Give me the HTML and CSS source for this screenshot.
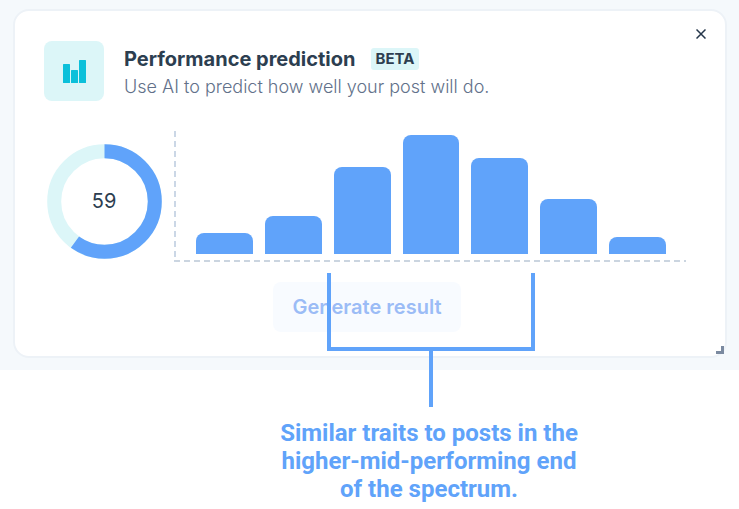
FILE: index.html
```html
<!DOCTYPE html>
<html lang="en">
<head>
  <meta charset="UTF-8" />
  <meta name="viewport" content="width=device-width, initial-scale=1" />
  <title>Performance prediction</title>
  <link rel="stylesheet" href="styles.css">
</head>
<body>
  <main>
    <div class="panel">
      <section class="card">
        <button type="button" class="close-btn" aria-label="Close">
          <svg width="10" height="10" viewBox="0 0 10 10">
            <path d="M0.5 0.5L9.5 9.5M9.5 0.5L0.5 9.5" stroke="#25364a" stroke-width="1.5" />
          </svg>
        </button>

        <!-- Title row -->
        <header class="card-header">
          <div class="card-icon">
            <svg width="24" height="24" viewBox="0 0 24 24" fill="#0cc0da">
              <rect x="1" y="5" width="7" height="19" rx="0.5" />
              <rect x="9" y="11" width="7" height="13" rx="0.5" />
              <rect x="17" y="1" width="7" height="23" rx="0.5" />
            </svg>
          </div>
          <div class="card-heading">
            <div class="title-row">
              <h1>Performance prediction</h1>
              <span class="badge">BETA</span>
            </div>
            <p class="subtitle">Use AI to predict how well your post will do.</p>
          </div>
        </header>

        <!-- Score and distribution -->
        <div class="results">
          <div class="gauge">
            <svg viewBox="0 0 116 116">
              <circle class="gauge-track" cx="58.5" cy="58.5" r="50.3" />
              <circle class="gauge-value" cx="58.5" cy="58.5" r="50.3" pathLength="100" transform="rotate(-90 58.5 58.5)" />
            </svg>
            <span class="score">59</span>
          </div>
          <div class="chart">
            <div class="bars">
              <div class="bar" style="height: 21px"></div>
              <div class="bar" style="height: 38px"></div>
              <div class="bar" style="height: 87px"></div>
              <div class="bar" style="height: 119px"></div>
              <div class="bar" style="height: 96px"></div>
              <div class="bar" style="height: 55px"></div>
              <div class="bar" style="height: 17px"></div>
              <svg class="bracket" width="208" height="134" viewBox="0 0 208 134">
                <path d="M2 0V76H206V0M104 76V134" />
              </svg>
            </div>
          </div>
        </div>

        <button type="button" class="generate-btn" disabled>Generate result</button>

        <svg class="resize" width="8" height="8" viewBox="0 0 8 8">
          <path d="M0 6.5H6.5V0" />
        </svg>
      </section>
    </div>

    <p class="caption">Similar traits to posts in the<br>higher-mid-performing end<br>of the spectrum.</p>
  </main>
</body>
</html>
```

FILE: styles.css
```css
* {
  box-sizing: border-box;
}

body {
  font-family: Inter, "Liberation Sans", sans-serif;
  margin: 0;
  background-color: #fff;
  color: #2c3e50;
}

h1, p {
  margin: 0;
}

svg {
  display: block;
}

.panel {
  background-color: #f5f9fc;
  padding: 9px 12px 12px 13px;
}

.card {
  position: relative;
  background: #fff;
  border: 2px solid #edf2f7;
  border-radius: 16px;
  padding: 30px 35px 24px 29px;
}

.close-btn {
  position: absolute;
  top: 13px;
  right: 14px;
  padding: 5px;
  border: none;
  background: none;
  cursor: pointer;
}

.card-header {
  display: flex;
  align-items: center;
  gap: 20px;
}

.card-icon {
  display: grid;
  place-items: center;
  width: 60px;
  height: 60px;
  border-radius: 8px;
  background-color: #dcf6f8;
}

.card-heading {
  padding-top: 4px;
}

.title-row {
  display: flex;
  align-items: center;
  gap: 15px;
}

h1 {
  font-size: 20px;
  line-height: 28px;
  font-weight: 700;
}

.badge {
  padding: 0 5px;
  border-radius: 3px;
  background-color: #dcf6f8;
  font-size: 15px;
  line-height: 22px;
  font-weight: 700;
}

.subtitle {
  font-size: 18px;
  line-height: 28px;
  font-weight: 300;
  color: #62718a;
}

.results {
  display: flex;
  gap: 12px;
  margin: 30px 4px 20px 2px;
}

.gauge {
  display: grid;
  place-items: center;
  flex: none;
  width: 116px;
  height: 116px;
  margin-top: 12px;
}

.gauge > * {
  grid-area: 1 / 1;
}

.gauge svg {
  width: 100%;
}

.gauge circle {
  fill: none;
  stroke-width: 14px;
}

.gauge-track {
  stroke: #dcf6f8;
}

.gauge-value {
  stroke: #60a3fa;
  stroke-dasharray: 60 40;
}

.score {
  font-size: 20px;
}

/* dashed axes */
.chart {
  flex: 1;
  height: 131px;
  padding: 0 20px 8px 22px;
  background:
    repeating-linear-gradient(to bottom, #cbd7e6 0 6px, transparent 6px 10px) left top / 2px 100% no-repeat,
    repeating-linear-gradient(to right, #cbd5e0 0 6px, transparent 6px 10px) left bottom / 100% 2px no-repeat;
}

.bars {
  position: relative;
  display: flex;
  align-items: flex-end;
  gap: 12px;
  height: 100%;
}

.bar {
  flex: 1;
  border-radius: 8px 8px 0 0;
  background-color: #60a3fa;
}

/* range marker drawn over the button and the card edge */
.bracket {
  position: absolute;
  z-index: 1;
  top: calc(100% + 19px);
  left: calc(50% - 104px);
  fill: none;
  stroke: #60a3fa;
  stroke-width: 4px;
}

.generate-btn {
  display: block;
  height: 50px;
  margin: 0 auto;
  padding: 0 20px;
  border: none;
  border-radius: 8px;
  background-color: #f8fbff;
  color: #9bbcf6;
  font-family: inherit;
  font-size: 20px;
  font-weight: 600;
}

.resize {
  position: absolute;
  right: 1px;
  bottom: 2px;
  fill: none;
  stroke: #7b8aa0;
  stroke-width: 3px;
}

.caption {
  padding: 49px 0 6px 119px;
  font-family: Roboto, "Liberation Sans", sans-serif;
  font-size: 24px;
  line-height: 28px;
  font-weight: 700;
  text-align: center;
  color: #60a3fa;
}
```
